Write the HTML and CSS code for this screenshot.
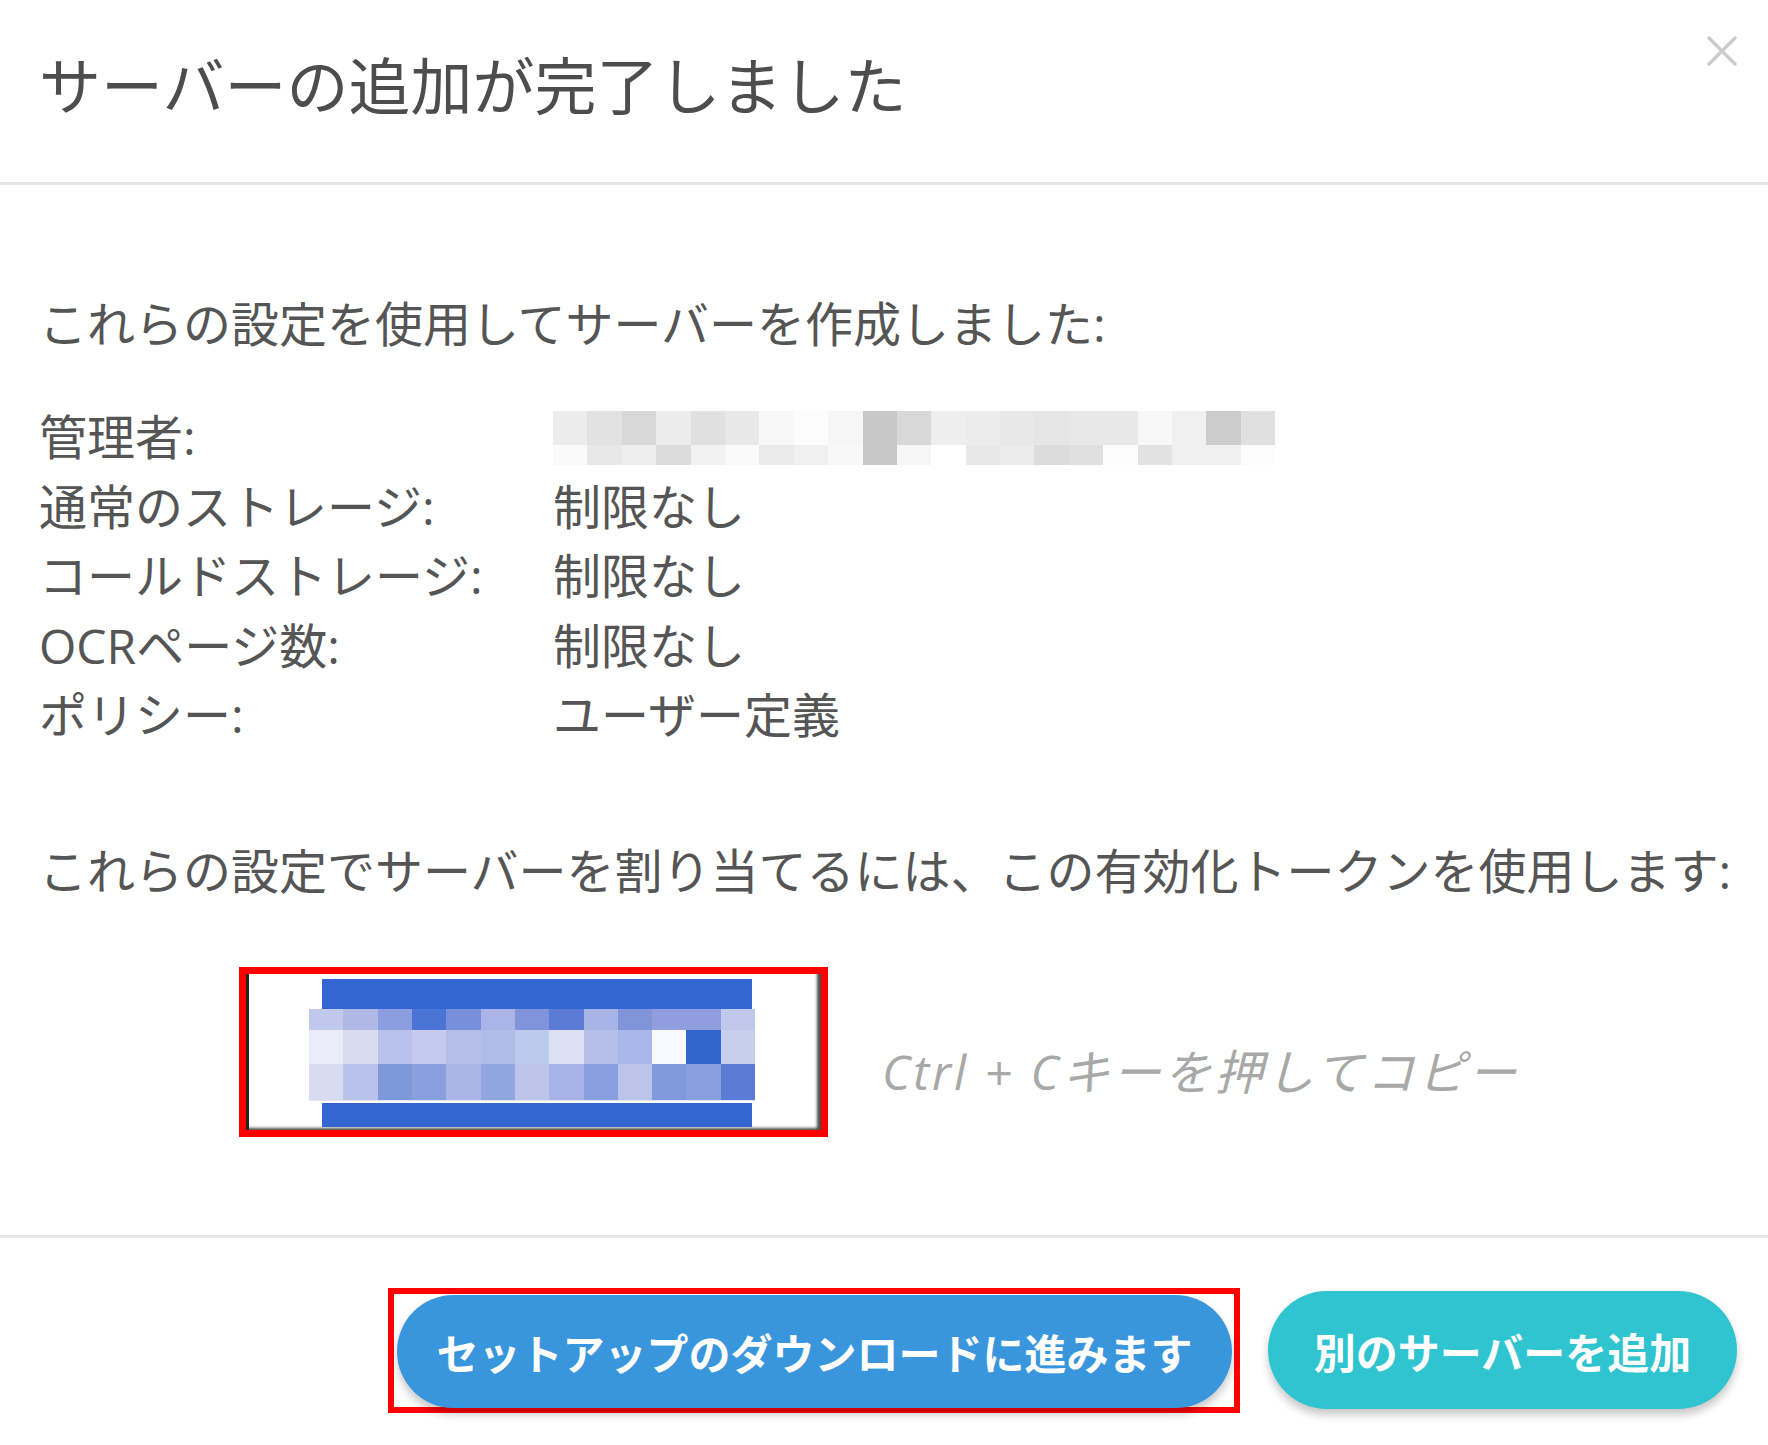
FILE: index.html
```html
<!DOCTYPE html>
<html lang="ja">
<head>
  <meta charset="UTF-8" />
  <meta name="viewport" content="width=device-width, initial-scale=1.0"/>
  <title>サーバーの追加が完了しました</title>
  <link rel="stylesheet" href="styles.css">
</head>
<body>

  <div class="modal">
    <header class="modal-header">
      <h1 class="modal-title">サーバーの追加が完了しました</h1>
      <button class="close-btn" aria-label="閉じる">
        <svg width="34" height="34" viewBox="0 0 34 34">
          <path d="M4 4 L30 30 M30 4 L4 30" stroke="#cccccc" stroke-width="3.5" stroke-linecap="round" fill="none"/>
        </svg>
      </button>
    </header>

    <section class="modal-body">
      <p class="intro">これらの設定を使用してサーバーを作成しました:</p>

      <div class="settings">
        <div class="label">管理者:</div>
        <div class="value"><div class="pixels admin-pixels" id="admin-pixels"></div></div>
        <div class="label">通常のストレージ:</div>
        <div class="value">制限なし</div>
        <div class="label">コールドストレージ:</div>
        <div class="value">制限なし</div>
        <div class="label">OCRページ数:</div>
        <div class="value">制限なし</div>
        <div class="label">ポリシー:</div>
        <div class="value">ユーザー定義</div>
      </div>

      <p class="intro token-intro">これらの設定でサーバーを割り当てるには、この有効化トークンを使用します:</p>

      <div class="token-row">
        <div class="token-box">
          <div class="token-inner">
            <div class="token-code">
              <div class="band"></div>
              <div class="pixels token-pixels" id="token-pixels"></div>
              <div class="band band-bottom"></div>
            </div>
          </div>
        </div>
        <span class="copy-hint">Ctrl + Cキーを押してコピー</span>
      </div>
    </section>

    <footer class="modal-footer">
      <div class="highlight">
        <button class="btn btn-download">セットアップのダウンロードに進みます</button>
      </div>
      <button class="btn btn-add">別のサーバーを追加</button>
    </footer>
  </div>

  <script>
    // blurred values, row by row
    const adminRows = [
      ['#ececec','#e2e2e2','#d8d8d8','#ececec','#e0e0e0','#e8e8e8','#f8f8f8','#fcfcfc','#f6f6f6','#c8c8c8','#d8d8d8','#eeeeee','#ececec','#e8e8e8','#e6e6e6','#e8e8e8','#e8e8e8','#f8f8f8','#f0f0f0','#cccccc','#e0e0e0'],
      ['#fafafa','#e8e8e8','#eeeeee','#dcdcdc','#f2f2f2','#fafafa','#eaeaea','#f0f0f0','#f8f8f8','#c8c8c8','#f6f6f6','#ffffff','#e8e8e8','#ececec','#dcdcdc','#e0e0e0','#fcfcfc','#e2e2e2','#f0f0f0','#f0f0f0','#fcfcfc']
    ];

    const tokenRows = [
      ['#c0c8ec','#b0b8e8','#8c9ee0','#4a74d6','#7890dc','#aab4e6','#8094dc','#5a7ad6','#a8b4e6','#8094da','#909ee0','#909ee0','#c0c8ec'],
      ['#eaecf8','#d8dcf2','#b8c2ea','#c4cbee','#b4bee8','#b0bce8','#bccaee','#dce0f4','#b4bee8','#a8b8e8','#f8f9fe','#3366cc','#c8ceee'],
      ['#d8dcf2','#b8c2ea','#7e98dc','#8aa0de','#aab6e6','#90a6e0','#bcc4ea','#a8b4e6','#8aa0de','#bcc4ea','#8098dc','#8aa0de','#5a7ad6']
    ];

    function renderPixels(id, rows) {
      const container = document.getElementById(id);
      rows.forEach((row) => {
        const el = document.createElement('div');
        el.className = 'pixel-row';
        row.forEach((color) => {
          const cell = document.createElement('span');
          cell.style.background = color;
          el.appendChild(cell);
        });
        container.appendChild(el);
      });
    }

    renderPixels('admin-pixels', adminRows);
    renderPixels('token-pixels', tokenRows);
  </script>
</body>
</html>
```

FILE: styles.css
```css
body {
  font-family: 'Open Sans', 'Noto Sans CJK JP', sans-serif;
  margin: 0;
  background: #fff;
  color: #555;
}

.modal {
  width: 1768px;
  min-height: 1445px;
  background: white;
}

.modal-header {
  display: flex;
  align-items: center;
  height: 172px;
  padding: 0 29px 10px 39px;
  border-bottom: 3px solid #e6e6e6;
}

.modal-title {
  margin: 0;
  font-size: 62px;
  font-weight: normal;
  line-height: 1.2;
  color: #4d4d4d;
}

.close-btn {
  margin-left: auto;
  align-self: flex-start;
  margin-top: 34px;
  padding: 0;
  border: none;
  background: none;
  cursor: pointer;
  line-height: 0;
}

.modal-body {
  padding: 104px 39px 98px;
}

.intro {
  margin: 0;
  font-size: 48px;
  line-height: 70px;
  white-space: nowrap;
}

.settings {
  display: grid;
  grid-template-columns: 514px 1fr;
  grid-auto-rows: 69.5px;
  margin-top: 43px;
  font-size: 48px;
  line-height: 69.5px;
}

.label,
.value {
  white-space: nowrap;
}

.pixels {
  display: flex;
  flex-direction: column;
}

.pixel-row {
  display: flex;
}

.admin-pixels {
  margin-top: 9px;
}

.admin-pixels .pixel-row span {
  width: 34.4px;
  height: 34px;
}

.admin-pixels .pixel-row + .pixel-row span {
  height: 20px;
}

.token-intro {
  margin-top: 86px;
}

.token-row {
  display: flex;
  align-items: center;
  margin-top: 61px;
  padding-left: 200px;
}

.token-box {
  width: 575px;
  height: 156px;
  border: 7px solid #ff0000;
}

.token-inner {
  height: 100%;
  box-sizing: border-box;
  border-left: 3px solid #222;
  box-shadow: inset -4px -2px 3px rgba(0,0,0,0.7);
  background: white;
  padding: 5px 0 0 60px;
}

.token-code {
  width: 446px;
}

.band {
  height: 30px;
  margin: 0 3px 0 13px;
  background: #3366d0;
}

.band-bottom {
  height: 24px;
  margin-top: 2px;
}

.token-pixels .pixel-row span {
  flex: 1;
  height: 21px;
}

.token-pixels .pixel-row:nth-child(2) span {
  height: 34px;
}

.token-pixels .pixel-row:nth-child(3) span {
  height: 36px;
  border-bottom: 1px solid #e4e6ee;
}

.copy-hint {
  margin-left: 54px;
  margin-top: 34px;
  font-size: 48px;
  font-style: italic;
  letter-spacing: 3px;
  color: #a8a8a8;
  white-space: nowrap;
}

.modal-footer {
  display: flex;
  justify-content: flex-end;
  align-items: center;
  gap: 28px;
  padding: 50px 31px 0;
  border-top: 3px solid #e8e8e8;
}

.highlight {
  border: 6px solid #ff0000;
  padding: 1px 0 0 3px;
  height: 112px;
  width: 837px;
}

.btn {
  border: none;
  border-radius: 60px;
  color: white;
  font-family: 'Open Sans', 'Noto Sans CJK JP', sans-serif;
  font-size: 42px;
  font-weight: bold;
  cursor: pointer;
  box-shadow: 0 6px 8px rgba(0,0,0,0.22);
  white-space: nowrap;
}

.btn-download {
  width: 835px;
  height: 113px;
  background: #3a96dc;
}

.btn-add {
  width: 469px;
  height: 118px;
  background: #30c4d0;
}
```
